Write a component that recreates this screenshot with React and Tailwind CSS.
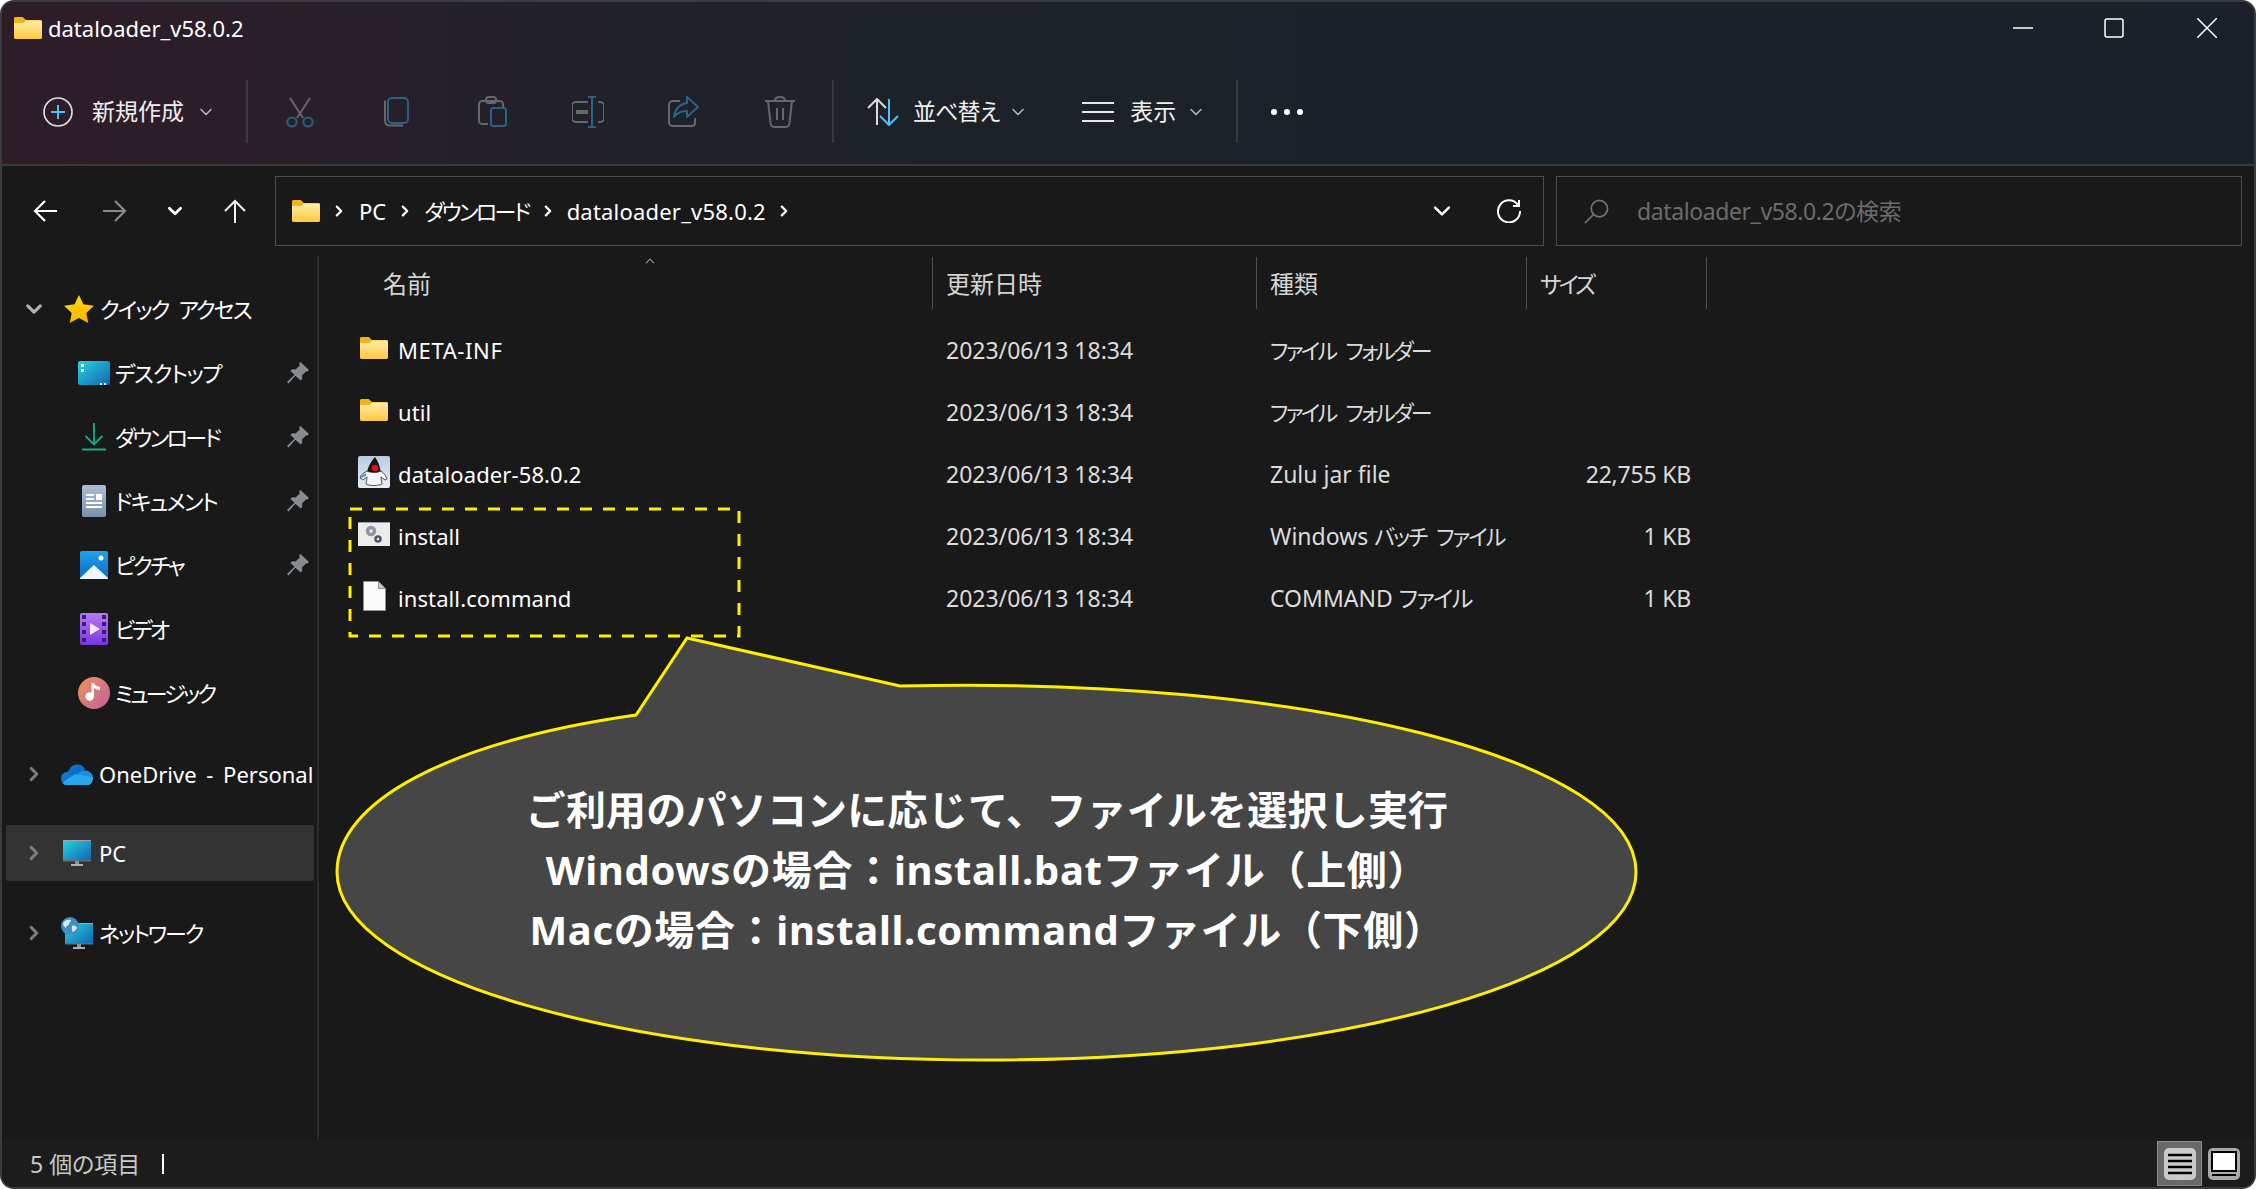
import React from "react";

const Folder = ({ id, className }) => (
  <svg viewBox="0 0 28 22" className={className}>
    <defs>
      <linearGradient id={id} x1="0" y1="0" x2="0" y2="1">
        <stop offset="0" stopColor="#ffeea6" />
        <stop offset="1" stopColor="#fdc83f" />
      </linearGradient>
    </defs>
    <path d="M0 1.5C0 .7.7 0 1.5 0h7.2l3.3 3h14.5c.8 0 1.5.7 1.5 1.5V8H0z" fill="#f5b31b" />
    <path d="M0 6h9.5L12 3.6h14.5c.8 0 1.5.7 1.5 1.5v15.4c0 .8-.7 1.5-1.5 1.5h-25C.7 22 0 21.3 0 20.5z" fill={`url(#${id})`} />
  </svg>
);

const Chevron = ({ dir = "down", className, width = 2 }) => (
  <svg viewBox="0 0 16 16" className={className} fill="none" stroke="currentColor" strokeWidth={width} strokeLinecap="round" strokeLinejoin="round">
    {dir === "down" ? <path d="M3 5.5l5 5 5-5" /> : <path d="M5.5 3l5 5-5 5" />}
  </svg>
);

const Scissors = () => (
  <svg viewBox="0 0 32 32" className="h-8 w-8" fill="none" strokeWidth="2">
    <path d="M6 2l13 20M26 2L13 22" stroke="#63686c" />
    <circle cx="8" cy="26" r="4.6" stroke="#2c6186" />
    <circle cx="24" cy="26" r="4.6" stroke="#2c6186" />
  </svg>
);

const Copy = () => (
  <svg viewBox="0 0 32 32" className="h-8 w-8" fill="none" strokeWidth="2">
    <path d="M5 4.5v20c0 3 2 5 5 5h13" stroke="#63686c" />
    <rect x="8" y="2" width="20" height="25" rx="4" stroke="#2c6186" />
  </svg>
);

const Paste = () => (
  <svg viewBox="0 0 32 32" className="h-8 w-8" fill="none" strokeWidth="2">
    <path d="M12 28H6c-1.500 0-3-1.300-3-3V8c0-1.700 1.500-3 3-3h18c1.500 0 3 1.300 3 3v3" stroke="#63686c" />
    <rect x="10" y="1" width="10" height="6" rx="2.500" stroke="#63686c" />
    <rect x="15" y="12" width="15" height="18" rx="2.500" stroke="#2c6186" />
  </svg>
);

const Rename = () => (
  <svg viewBox="0 0 32 32" className="h-8 w-8" fill="none" strokeWidth="2">
    <path d="M16 6H4C2 6 0 7.500 0 10v12c0 2.500 2 4 4 4h12M26 6h2c2 0 4 1.500 4 4v12c0 2.500-2 4-4 4h-2" stroke="#63686c" />
    <path d="M16 1h8M20 1v30M16 31h8" stroke="#2c6186" />
    <rect x="4" y="14" width="12" height="4" fill="#63686c" stroke="none" />
  </svg>
);

const Share = () => (
  <svg viewBox="0 0 32 32" className="h-8 w-8" fill="none" strokeWidth="2">
    <path d="M12 5H5C3 5 1 6.500 1 8.500v18C1 28.500 3 30 5 30h19c2 0 3-1.500 3-3.500V22" stroke="#63686c" />
    <path d="M19 1l11 10-11 10v-6c-6 0-10 2-13 6 1-8 6-13 13-14z" stroke="#2c6186" strokeLinejoin="round" />
  </svg>
);

const Trash = () => (
  <svg viewBox="0 0 32 32" className="h-8 w-8" fill="none" stroke="#63686c" strokeWidth="2">
    <path d="M1 5h30M4 5l2.500 22c.2 2 1.500 4 4 4h11c2.500 0 3.800-2 4-4L28 5M11 5c0-3 2-4 5-4s5 1 5 4M13 12v12M19 12v12" />
  </svg>
);

const ToolbarSep = () => <div className="h-[63px] w-[2px] bg-[#353a40]" />;

const Pin = () => (
  <svg viewBox="0 0 22 22" className="h-[22px] w-[22px]" fill="#868c92">
    <path d="M13.500 0l8.500 8-1.800 1.800-1.200-.6-4 4.300c.6 2 .1 3.800-1.200 5.100L8.400 13.800 1.500 21.500 0 20l7.500-7.200L3.300 8.700C4.700 7.400 6.500 6.900 8.500 7.500l4.300-4-.8-1.700z" />
  </svg>
);

const Desktop = () => (
  <svg viewBox="0 0 32 24" className="h-6 w-8">
    <defs>
      <linearGradient id="dk" x1="0" y1="0" x2="1" y2="1">
        <stop offset="0" stopColor="#2bd3e3" />
        <stop offset="1" stopColor="#0f64ad" />
      </linearGradient>
    </defs>
    <rect width="32" height="24" rx="2" fill="url(#dk)" />
    <rect x="3" y="3" width="3" height="3" fill="#fff" />
    <rect x="3" y="8" width="3" height="3" fill="#fff" />
    <rect x="22" y="22" width="2" height="2" fill="#cfe" />
    <rect x="26" y="22" width="2" height="2" fill="#cfe" />
  </svg>
);

const Download = () => (
  <svg viewBox="0 0 24 28" className="h-7 w-6" fill="none" stroke="#1fa98c" strokeWidth="1.800">
    <path d="M12 0v21M3.500 13l8.500 8.500 8.500-8.500M0 26.500h24" />
  </svg>
);

const Documents = () => (
  <svg viewBox="0 0 24 32" className="h-8 w-6">
    <defs>
      <linearGradient id="doc" x1="0" y1="0" x2="0" y2="1">
        <stop offset="0" stopColor="#a9bed4" />
        <stop offset="1" stopColor="#7b93ad" />
      </linearGradient>
    </defs>
    <rect width="24" height="32" rx="2" fill="url(#doc)" />
    <g fill="#fff">
      <rect x="4" y="9" width="8" height="2" />
      <rect x="4" y="13" width="8" height="2" />
      <rect x="14" y="9" width="6" height="6" />
      <rect x="4" y="17" width="16" height="2" />
      <rect x="4" y="21" width="16" height="2" />
    </g>
  </svg>
);

const Pictures = () => (
  <svg viewBox="0 0 28 28" className="h-7 w-7">
    <defs>
      <linearGradient id="pic" x1="0" y1="0" x2="0" y2="1">
        <stop offset="0" stopColor="#22a0ec" />
        <stop offset="1" stopColor="#0b6cc0" />
      </linearGradient>
    </defs>
    <rect width="28" height="28" rx="2" fill="url(#pic)" />
    <circle cx="21" cy="7" r="2.500" fill="#fff" />
    <path d="M0 27L14 14l14 13v1H0z" fill="#eef6fd" />
  </svg>
);

const Video = () => (
  <svg viewBox="0 0 28 32" className="h-8 w-7">
    <defs>
      <linearGradient id="vid" x1="0" y1="0" x2="0" y2="1">
        <stop offset="0" stopColor="#b67bf5" />
        <stop offset="1" stopColor="#7a36e0" />
      </linearGradient>
    </defs>
    <rect width="28" height="32" rx="2" fill="url(#vid)" />
    <g fill="#3b1a78">
      <rect x="2" y="2" width="4" height="4" />
      <rect x="2" y="9" width="4" height="4" />
      <rect x="2" y="17" width="4" height="4" />
      <rect x="2" y="25" width="4" height="4" />
      <rect x="22" y="2" width="4" height="4" />
      <rect x="22" y="9" width="4" height="4" />
      <rect x="22" y="17" width="4" height="4" />
      <rect x="22" y="25" width="4" height="4" />
    </g>
    <path d="M10 10l10 6-10 6z" fill="#f2e9ff" />
  </svg>
);

const Music = () => (
  <svg viewBox="0 0 32 32" className="h-8 w-8">
    <defs>
      <linearGradient id="mus" x1="0" y1="0" x2="1" y2="1">
        <stop offset="0" stopColor="#f0935a" />
        <stop offset="1" stopColor="#c25f9c" />
      </linearGradient>
    </defs>
    <circle cx="16" cy="16" r="16" fill="url(#mus)" />
    <path d="M16 6v13.500a4.300 4.300 0 1 1-2.500-3.900V6zM16 6c1 3 3.500 3.500 6 4v3c-2.500 0-4.500-.7-6-2z" fill="#fff" />
  </svg>
);

const OneDrive = () => (
  <svg viewBox="0 0 32 22" className="h-[22px] w-8">
    <path d="M8 7a9 9 0 0 1 16-1l-8 10H5C6 11 5 9 8 7z" fill="#0a6fc6" />
    <path d="M6 9c-4 .5-6 3-6 6 0 2 .8 3.500 2 4.500L14 15z" fill="#0a78d4" />
    <path d="M24 7.500c4 0 7 2.500 8 6L22 17l-8-3c2-3 5-6.500 10-6.500z" fill="#1490df" />
    <path d="M14 11l18 3c.3 4-2 8-5 8H5c-2 0-3-1-3.500-2.500z" fill="#28a8ea" />
  </svg>
);

const Monitor = ({ id, className }) => (
  <svg viewBox="0 0 28 26" className={className}>
    <defs>
      <linearGradient id={id} x1="0" y1="0" x2="1" y2="1">
        <stop offset="0" stopColor="#2bd3e3" />
        <stop offset="1" stopColor="#0f64ad" />
      </linearGradient>
    </defs>
    <rect width="28" height="21" fill={`url(#${id})`} />
    <rect width="28" height="1" fill="#9aa5ad" />
    <rect y="20" width="28" height="1.500" fill="#5d6f7c" />
    <rect x="12" y="21" width="4" height="3" fill="#8a949b" />
    <rect x="8" y="24" width="12" height="2" fill="#a9b2b8" />
  </svg>
);

const Network = () => (
  <div className="relative h-8 w-8">
    <Monitor id="netm" className="absolute bottom-0 right-0 h-[26px] w-[28px]" />
    <svg viewBox="0 0 18 18" className="absolute left-0 top-0 h-[18px] w-[18px]">
      <circle cx="9" cy="9" r="9" fill="#3f8fc7" />
      <path d="M2 6c2-3 5-4 8-3 0 2-2 2-2 4s-3 1-3 4C3 10 2 8 2 6zM11 9c3-1 4 0 5 2-1 2-3 4-5 4 1-2-1-4 0-6z" fill="#d7edf7" />
    </svg>
  </div>
);

const Star = () => (
  <svg viewBox="0 0 30 28" className="h-7 w-[30px]">
    <defs>
      <linearGradient id="star" x1="0" y1="0" x2="0" y2="1">
        <stop offset="0" stopColor="#ffd800" />
        <stop offset="1" stopColor="#fdb300" />
      </linearGradient>
    </defs>
    <path d="M15 0l4.400 9.300 10.600 1.400-7.700 7.200 2 10.100-9.300-5-9.300 5 2-10.100L0 10.700l10.600-1.400z" fill="url(#star)" />
  </svg>
);

const JavaFile = () => (
  <svg viewBox="0 0 32 32" className="h-8 w-8">
    <defs>
      <linearGradient id="jv" x1="0" y1="0" x2="0" y2="1">
        <stop offset="0" stopColor="#b9cde2" />
        <stop offset="1" stopColor="#e8edf3" />
      </linearGradient>
    </defs>
    <rect width="32" height="32" rx="2" fill="url(#jv)" />
    <path d="M17 1c3 4 5 9 6 16l-14-1c1-5 4-11 8-15z" fill="#151515" />
    <path d="M9 15c-2 1-6 3-7 7l3 2 4-3c0 3-1 5-1 7 3 2 13 2 16 0 0-2-1-4-1-7l4 3 2-1c-1-3-3-6-6-8-4 2-10 2-14 0z" fill="#f4f5f6" stroke="#2a2a2a" strokeWidth=".8" />
    <path d="M3 20l5-3v3l-5 2z" fill="#5f93bd" />
    <circle cx="17" cy="12" r="3.300" fill="#e3101e" />
  </svg>
);

const BatFile = () => (
  <svg viewBox="0 0 32 24" className="h-6 w-8">
    <rect width="32" height="24" fill="#ebecee" />
    <rect y="0" width="32" height="1" fill="#9aa0a5" />
    <circle cx="13" cy="9" r="3.500" fill="none" stroke="#8d96a0" strokeWidth="3.500" />
    <circle cx="20" cy="17" r="2.500" fill="none" stroke="#4e5862" strokeWidth="2.500" />
  </svg>
);

const PlainFile = () => (
  <svg viewBox="0 0 23 30" className="h-[30px] w-[23px]">
    <path d="M.5.500h15l7 7v22H.5z" fill="#fbfbfb" stroke="#8f8f8f" />
    <path d="M15.500.500v7h7z" fill="#c8c8c8" stroke="#8f8f8f" />
  </svg>
);

const sideItems = [
  { name: "デスクトップ", icon: <Desktop />, track: "tracking-[-1.4px]" },
  { name: "ダウンロード", icon: <Download />, track: "tracking-[-2.6px]" },
  { name: "ドキュメント", icon: <Documents />, track: "tracking-[-1.7px]" },
  { name: "ピクチャ", icon: <Pictures />, track: "tracking-[-2.5px]" },
  { name: "ビデオ", icon: <Video />, track: "tracking-[-2.9px]", unpinned: true },
  { name: "ミュージック", icon: <Music />, track: "tracking-[-2.9px]", unpinned: true },
];

const kanaFolder = <span className="text-[22px] tracking-[-2.7px] [word-spacing:7px]">ファイル フォルダー</span>;

const files = [
  { name: "META-INF", track: "tracking-[0.6px]", icon: <Folder id="f1" className="h-[22px] w-7" />, type: kanaFolder },
  { name: "util", track: "tracking-[0.1px]", icon: <Folder id="f2" className="h-[22px] w-7" />, type: kanaFolder },
  { name: "dataloader-58.0.2", track: "tracking-[0.1px]", icon: <JavaFile />, type: "Zulu jar file", size: "22,755 KB" },
  {
    name: "install",
    track: "tracking-[0.1px]",
    icon: <BatFile />,
    type: <>Windows <span className="text-[22px] tracking-[-2px] [word-spacing:6px]">バッチ ファイル</span></>,
    size: "1 KB",
  },
  {
    name: "install.command",
    track: "tracking-[0.1px]",
    icon: <PlainFile />,
    type: <>COMMAND <span className="tracking-[-1.7px]">ファイル</span></>,
    size: "1 KB",
  },
];

const TreeRow = ({ icon, name, active, track = "" }) => (
  <div className={`flex h-[56px] items-center rounded-[2px] ${active ? "bg-[#333333]" : ""}`}>
    <Chevron dir="right" width={2.6} className="ml-[19px] h-[18px] w-[18px] text-[#7d7d7d]" />
    <div className="ml-[16px] flex w-[36px] justify-center">{icon}</div>
    <span className={`ml-[4px] text-[22px] leading-none text-white [word-spacing:4px] ${track}`}>{name}</span>
  </div>
);

export default function App() {
  return (
    <div className="relative flex h-[1189px] w-[2256px] flex-col overflow-hidden rounded-[14px] border-2 border-[#3a3b3d] bg-[#191919] font-['Noto_Sans','Noto_Sans_CJK_JP',sans-serif] [font-feature-settings:'palt']">
      {/* title bar + command bar */}
      <div className="h-[164px] shrink-0 border-b-[2px] border-[#3a3a3a] bg-[linear-gradient(90deg,#2e1d29_0%,#291f29_12%,#202129_28%,#1c2228_45%,#1b212a_100%)]">
        <div className="flex h-[60px] items-start pl-[12px] pt-[15px]">
          <Folder id="title" className="h-[22px] w-7" />
          <span className="ml-[6px] text-[22px] leading-[22px] text-white">dataloader_v58.0.2</span>
          <div className="ml-auto flex h-[22px] items-center pr-[37px]">
            <svg viewBox="0 0 20 20" className="h-5 w-5" stroke="#fff" strokeWidth="1.500"><path d="M0 10h20" /></svg>
            <svg viewBox="0 0 20 20" className="ml-[71px] h-5 w-5" fill="none" stroke="#fff" strokeWidth="1.500"><rect x="1" y="1" width="18" height="18" rx="2" /></svg>
            <svg viewBox="0 0 20 20" className="ml-[73px] h-5 w-5" stroke="#fff" strokeWidth="1.500"><path d="M0 0l20 20M20 0L0 20" /></svg>
          </div>
        </div>
        <div className="flex h-[102px] items-start pt-[18px]">
          <div className="flex h-[63px] items-center">
            <svg viewBox="0 0 30 30" className="ml-[41px] h-[30px] w-[30px]" fill="none" strokeWidth="1.700">
              <circle cx="15" cy="15" r="14" stroke="#dcdcdc" />
              <path d="M15 8v14M8 15h14" stroke="#4cc2ff" strokeWidth="2" />
            </svg>
            <span className="ml-[19px] text-[23px] leading-none text-[#f0f0f0]">新規作成</span>
            <Chevron width={1.6} className="ml-[14px] h-4 w-4 text-[#b5b5b5]" />
            <div className="ml-[32px]"><ToolbarSep /></div>
            <div className="ml-[36px]"><Scissors /></div>
            <div className="ml-[64px]"><Copy /></div>
            <div className="ml-[64px]"><Paste /></div>
            <div className="ml-[64px]"><Rename /></div>
            <div className="ml-[64px]"><Share /></div>
            <div className="ml-[64px]"><Trash /></div>
            <div className="ml-[36px]"><ToolbarSep /></div>
            <svg viewBox="0 0 32 28" className="ml-[33px] h-7 w-8" fill="none" strokeWidth="2">
              <path d="M10 27V1M1 10l9-9 9 9" stroke="#dcdcdc" />
              <path d="M22 1v26M13 18l9 9 9-9" stroke="#4cc2ff" />
            </svg>
            <span className="ml-[14px] text-[23px] leading-none tracking-[-1px] text-[#f0f0f0]">並べ替え</span>
            <Chevron width={1.6} className="ml-[11px] h-4 w-4 text-[#b5b5b5]" />
            <svg viewBox="0 0 32 20" className="ml-[56px] h-5 w-8" stroke="#e6e6e6" strokeWidth="2"><path d="M0 1h32M0 10h32M0 19h32" /></svg>
            <span className="ml-[16px] text-[23px] leading-none text-[#f0f0f0]">表示</span>
            <Chevron width={1.6} className="ml-[12px] h-4 w-4 text-[#b5b5b5]" />
            <div className="ml-[32px]"><ToolbarSep /></div>
            <div className="ml-[33px] flex gap-[7px]">
              <div className="h-[6px] w-[6px] rounded-full bg-white" />
              <div className="h-[6px] w-[6px] rounded-full bg-white" />
              <div className="h-[6px] w-[6px] rounded-full bg-white" />
            </div>
          </div>
        </div>
      </div>

      {/* nav row */}
      <div className="flex h-[90px] shrink-0 items-start pt-[10px]">
        <div className="flex h-[70px] w-[273px] shrink-0 items-center text-white">
          <svg viewBox="0 0 24 22" className="ml-[31px] h-[22px] w-6" fill="none" stroke="#fff" strokeWidth="2.200"><path d="M24 11H2M12 1L2 11l10 10" /></svg>
          <svg viewBox="0 0 24 22" className="ml-[46px] h-[22px] w-6" fill="none" stroke="#8a8a8a" strokeWidth="2.200"><path d="M0 11h22M12 1l10 10-10 10" /></svg>
          <Chevron width={2.4} className="ml-[39px] h-[18px] w-[18px] text-white" />
          <svg viewBox="0 0 22 24" className="ml-[40px] h-6 w-[22px]" fill="none" stroke="#f2f2f2" strokeWidth="2"><path d="M11 24V2M1 12L11 2l10 10" /></svg>
        </div>
        <div className="flex h-[70px] w-[1269px] shrink-0 items-center border border-[#4d4d4d] pr-[22px]">
          <Folder id="path" className="ml-[16px] h-[22px] w-7" />
          <Chevron dir="right" width={2.6} className="ml-[12px] h-[14px] w-[14px] text-white" />
          <span className="ml-[13px] text-[22px] leading-none text-white">PC</span>
          <Chevron dir="right" width={2.6} className="ml-[12px] h-[14px] w-[14px] text-white" />
          <span className="ml-[12px] text-[22px] leading-none tracking-[-2.6px] text-white">ダウンロード</span>
          <Chevron dir="right" width={2.6} className="ml-[12px] h-[14px] w-[14px] text-white" />
          <span className="ml-[12px] text-[22px] leading-none tracking-[0.2px] text-white">dataloader_v58.0.2</span>
          <Chevron dir="right" width={2.6} className="ml-[11px] h-[14px] w-[14px] text-white" />
          <Chevron width={1.8} className="ml-auto h-[22px] w-[22px] text-white" />
          <svg viewBox="0 0 24 24" className="ml-[44px] h-6 w-6" fill="none" stroke="#fff" strokeWidth="2"><path d="M21 6a11 11 0 1 0 2 6M22 1v6h-6" /></svg>
        </div>
        <div className="ml-[12px] flex h-[70px] w-[686px] shrink-0 items-center border border-[#4d4d4d] pl-[27px]">
          <svg viewBox="0 0 26 26" className="h-[25px] w-[25px]" fill="none" stroke="#75716b" strokeWidth="1.800"><circle cx="16" cy="10" r="8.500" /><path d="M10 16L1 25" /></svg>
          <span className="ml-[28px] text-[23px] leading-none tracking-[-0.4px] text-[#6c6c6c]">dataloader_v58.0.2の検索</span>
        </div>
      </div>

      <div className="flex min-h-0 flex-1">
        {/* sidebar */}
        <div className="w-[317px] shrink-0 border-r-[2px] border-[#2b2b2b] pl-[4px] pr-[3px] pt-[21px]">
          <div className="flex h-[64px] items-center">
            <Chevron width={2.6} className="ml-[18px] h-[20px] w-[20px] text-[#b0b0b0]" />
            <div className="ml-[20px]"><Star /></div>
            <span className="ml-[6px] text-[22px] leading-none tracking-[-1.9px] text-white [word-spacing:6px]">クイック アクセス</span>
          </div>
          {sideItems.map((item) => (
            <div key={item.name} className="flex h-[64px] items-center">
              <div className="ml-[70px] flex w-[36px] justify-center">{item.icon}</div>
              <span className={`ml-[3px] text-[22px] leading-none text-white ${item.track}`}>{item.name}</span>
              {!item.unpinned && <div className="ml-auto mr-[5px]"><Pin /></div>}
            </div>
          ))}
          <div className="mt-[-43px] h-[64px]" />
          <TreeRow icon={<OneDrive />} name="OneDrive - Personal" />
          <div className="mt-[23px]"><TreeRow icon={<Monitor id="pcm" className="h-[26px] w-7" />} name="PC" active /></div>
          <div className="mt-[24px]"><TreeRow icon={<Network />} name="ネットワーク" track="tracking-[-2.2px]" /></div>
        </div>

        {/* file list */}
        <div className="min-w-0 flex-1 pt-[1px]">
          <div className="relative grid h-[52px] grid-cols-[614px_324px_270px_180px] text-[24px] leading-none text-[#d4d4d4]">
            <div className="flex items-center border-r border-[#505050] pl-[64px] pt-[2px]">名前</div>
            <div className="flex items-center border-r border-[#505050] pl-[13px] pt-[2px]">更新日時</div>
            <div className="flex items-center border-r border-[#505050] pl-[13px] pt-[2px]">種類</div>
            <div className="flex items-center border-r border-[#505050] pl-[13px] pt-[2px] text-[23px] tracking-[-3.2px]">サイズ</div>
            <Chevron dir="down" width={1.4} className="absolute left-[325px] top-[-2px] h-3 w-3 rotate-180 text-[#9a9a9a]" />
          </div>
          <div className="pt-[10px]">
            {files.map((file) => (
              <div key={file.name} className="grid h-[62px] grid-cols-[614px_324px_270px_180px] items-center text-[23px] leading-none text-[#dcdcdc]">
                <div className="flex items-center pl-[39px]">
                  <div className="mt-[-5px] flex w-8 justify-center">{file.icon}</div>
                  <span className={`ml-[8px] text-[22px] text-white ${file.track}`}>{file.name}</span>
                </div>
                <div className="pl-[13px]">2023/06/13 18:34</div>
                <div className="pl-[13px]">{file.type}</div>
                <div className="pr-[16px] text-right tracking-[-0.2px]">{file.size}</div>
              </div>
            ))}
          </div>
        </div>
      </div>

      {/* status bar */}
      <div className="flex h-[47px] shrink-0 items-center bg-[#1c1c1c]">
        <span className="ml-[28px] pt-[2px] text-[23px] leading-none text-[#c8c8c8]">5 個の項目</span>
        <div className="ml-[22px] h-[20px] w-[2px] bg-white" />
        <div className="ml-auto flex h-[45px] w-[45px] items-center justify-center border border-[#8a8a8a] bg-[#696969]">
          <svg viewBox="0 0 32 32" className="h-8 w-8">
            <rect width="32" height="32" rx="5" fill="#cacaca" />
            <path d="M4 7h24M4 13h24M4 19h24M4 25h24" stroke="#000" strokeWidth="2.400" />
          </svg>
        </div>
        <svg viewBox="0 0 32 32" className="ml-[6px] mr-[14px] h-8 w-8">
          <rect width="32" height="32" rx="5" fill="#aaaaaa" />
          <rect x="4" y="4" width="24" height="19" fill="#fff" stroke="#000" strokeWidth="2" />
          <path d="M4 27h24" stroke="#000" strokeWidth="2" />
        </svg>
      </div>

      {/* annotation overlay */}
      <svg viewBox="0 0 2256 1189" className="pointer-events-none absolute left-[-2px] top-[-2px] h-[1189px] w-[2256px]">
        <rect x="350" y="509" width="389" height="127" fill="none" stroke="#ffee00" strokeWidth="3" strokeDasharray="12 11" />
        <path d="M900 686C1310 676 1636 760 1636 872c0 105-290 188-650 188s-649-83-649-188c0-70 110-130 299-157l51-77z" fill="#464646" stroke="#ffee00" strokeWidth="3" strokeLinejoin="miter" />
      </svg>
      <div className="absolute left-[335px] top-[778px] flex w-[1300px] flex-col items-center text-[40px] font-bold leading-[60px] text-white [font-feature-settings:normal]">
        <span className="tracking-[0.2px]">ご利用のパソコンに応じて、ファイルを選択し実行</span>
        <span className="tracking-[0.7px]">Windowsの場合：install.batファイル（上側）</span>
        <span className="tracking-[0.65px]">Macの場合：install.commandファイル（下側）</span>
      </div>
    </div>
  );
}
